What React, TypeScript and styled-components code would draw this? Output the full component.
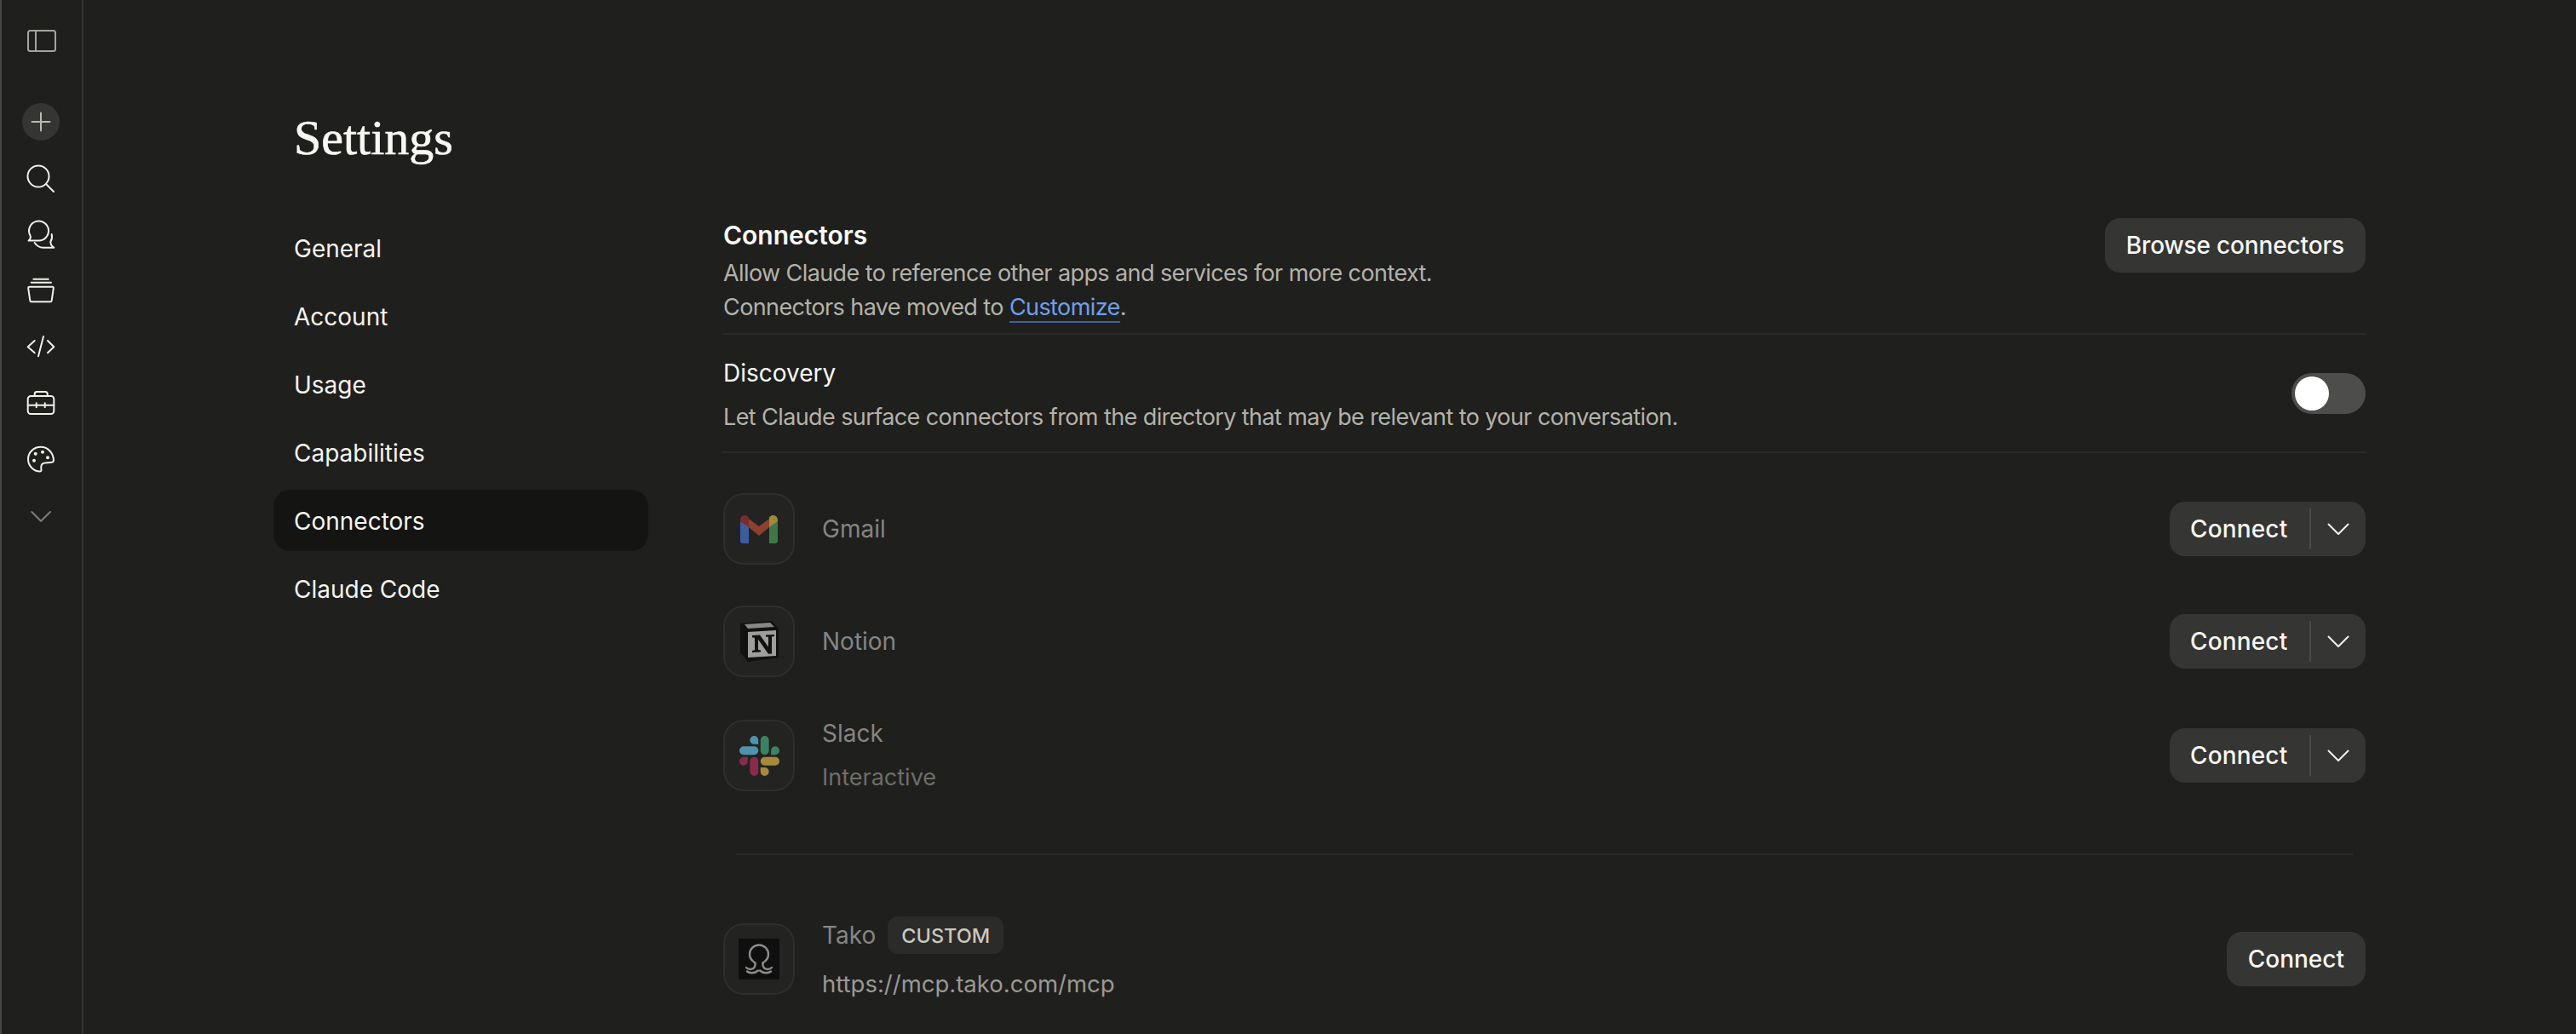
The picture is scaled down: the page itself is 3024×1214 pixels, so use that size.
import React from "react";
import styled, { createGlobalStyle } from "styled-components";

const GlobalStyle = createGlobalStyle`
  html, body {
    margin: 0;
    height: 100%;
    background: #1f1f1e;
    overflow: hidden;
  }
  #root {
    height: 100%;
  }
  * {
    box-sizing: border-box;
  }
`;

const Page = styled.div`
  display: flex;
  height: 1214px;
  overflow: hidden;
  background: #1f1f1e;
  color: #f5f4ef;
  font-family: Inter, "Liberation Sans", sans-serif;
`;

const Rail = styled.nav`
  flex: 0 0 98px;
  display: flex;
  flex-direction: column;
  align-items: center;
  padding: 15px 3px 0 0;
  border-left: 2px solid #474745;
  border-right: 2px solid #343432;
`;

const RailButton = styled.button<{ $gap?: number }>`
  flex: 0 0 66px;
  width: 48px;
  padding: 0;
  border: 0;
  background: transparent;
  display: flex;
  align-items: center;
  justify-content: center;
  margin-bottom: ${(props) => props.$gap ?? 0}px;
`;

const NewChat = styled.span`
  width: 44px;
  height: 44px;
  border-radius: 50%;
  background: #353533;
  display: flex;
  align-items: center;
  justify-content: center;
`;

const Main = styled.main`
  flex: 1;
  display: grid;
  grid-template-columns: 440px 1fr;
  grid-template-rows: 135px auto;
  column-gap: 88px;
  align-content: start;
  padding: 120px 247px 0 223px;
`;

const Title = styled.h1`
  grid-column: 1 / 3;
  margin: 0 0 0 24px;
  font-family: "Liberation Serif", serif;
  font-weight: 400;
  font-size: 58px;
  line-height: 83px;
  color: #f8f7f3;
  -webkit-text-stroke: 0.6px #f8f7f3;
`;

const SideNav = styled.div`
  display: flex;
  flex-direction: column;
  gap: 8px;
`;

const NavItem = styled.div<{ $active?: boolean }>`
  height: 72px;
  padding: 2px 0 0 24px;
  display: flex;
  align-items: center;
  border-radius: 20px;
  font-size: 28px;
  color: #f5f4ef;
  background: ${(props) => (props.$active ? "#141413" : "transparent")};
`;

const Content = styled.section`
  display: flex;
  flex-direction: column;
`;

const Header = styled.div`
  display: flex;
  justify-content: space-between;
  align-items: flex-start;
  height: 138px;
  border-bottom: 2px solid #2b2b29;
`;

const HeaderTitle = styled.h2`
  margin: -1px 0 3px;
  font-size: 30px;
  font-weight: 600;
  line-height: 44px;
  color: #fbfaf6;
`;

const Description = styled.p`
  margin: 0;
  font-size: 27px;
  line-height: 40px;
  color: #b3b2a9;
  letter-spacing: -0.59px;
`;

const Customize = styled.a`
  color: #6f9fe8;
  border-bottom: 2px solid #41609a;
`;

const Button = styled.button`
  height: 64px;
  padding: 0 25px;
  border: 0;
  border-radius: 18px;
  background: #353533;
  color: #f7f6f2;
  font-family: inherit;
  font-size: 28px;
  font-weight: 500;
`;

const BrowseButton = styled(Button)`
  margin-top: 1px;
  letter-spacing: -0.15px;
`;

const Discovery = styled.div`
  display: flex;
  justify-content: space-between;
  align-items: center;
  height: 139px;
  border-bottom: 2px solid #2b2b29;
`;

const DiscoveryText = styled.div`
  display: flex;
  flex-direction: column;
  gap: 10px;
  padding-top: 2px;
`;

const DiscoveryTitle = styled.div`
  font-size: 28px;
  line-height: 44px;
  color: #f8f7f3;
`;

const Toggle = styled.div`
  width: 87px;
  height: 48px;
  padding: 4px;
  border-radius: 24px;
  background: #4d4d4b;
`;

const Knob = styled.div`
  width: 40px;
  height: 40px;
  border-radius: 50%;
  background: #fff;
`;

const List = styled.div`
  display: flex;
  flex-direction: column;
  gap: 4px;
  padding-top: 25px;
`;

const Row = styled.div`
  display: flex;
  align-items: center;
  padding: 22px 0;
`;

const LogoBox = styled.div`
  flex: 0 0 84px;
  height: 84px;
  margin-right: 32px;
  display: flex;
  align-items: center;
  justify-content: center;
  border-radius: 24px;
  background: #232322;
  border: 2px solid #2e2e2c;
`;

const RowText = styled.div<{ $gap?: number; $twoLine?: boolean }>`
  flex: 1;
  display: flex;
  flex-direction: column;
  gap: ${(props) => props.$gap ?? 12}px;
  margin: ${(props) => (props.$twoLine ? "-2px 0" : "0")};
`;

const Name = styled.div`
  font-size: 28px;
  line-height: 40px;
  color: #858582;
`;

const SubText = styled.div`
  font-size: 27px;
  line-height: 40px;
  color: #6e6e6a;
`;

const SplitButton = styled.div`
  display: flex;
  align-items: center;
  height: 64px;
  width: 230px;
  border-radius: 18px;
  background: #353533;
`;

const SplitLabel = styled.span`
  flex: 0 0 166px;
  padding-left: 24px;
  font-size: 28px;
  font-weight: 500;
  letter-spacing: 0.15px;
  color: #f7f6f2;
  border-right: 2px solid #4a4a48;
  line-height: 48px;
`;

const SplitArrow = styled.span`
  flex: 1;
  display: flex;
  justify-content: center;
`;

const Separator = styled.div`
  height: 2px;
  margin: 49px 15px 72px;
  background: #2b2b29;
`;

const TakoRow = styled(Row)`
  padding: 0;
`;

const NameLine = styled.div`
  display: flex;
  align-items: center;
  gap: 14px;
  height: 44px;
`;

const Badge = styled.span`
  height: 44px;
  padding: 0 16px;
  display: flex;
  align-items: center;
  border-radius: 12px;
  background: #2b2b29;
  color: #c9c8c0;
  font-size: 23.5px;
  font-weight: 500;
`;

const Url = styled.div`
  font-size: 27.5px;
  line-height: 40px;
  color: #9a9992;
`;

const RailIcon = ({ children, color = "#f1f0eb" }: { children: React.ReactNode; color?: string }) => (
  <svg
    width="48"
    height="48"
    viewBox="0 0 48 48"
    fill="none"
    stroke={color}
    strokeWidth="2"
    strokeLinecap="round"
    strokeLinejoin="round"
  >
    {children}
  </svg>
);

const GmailLogo = () => (
  <svg width="44" height="33" viewBox="0 0 44 33">
    <path fill="#3d5c9e" d="M0 7v23a3 3 0 0 0 3 3h7V11z" />
    <path fill="#417647" d="M44 7v23a3 3 0 0 1-3 3h-7V11z" />
    <path fill="#8f3f30" d="M10 4l12 9 12-9v10L22 24 10 14z" />
    <path fill="#7a2d28" d="M0 5.500C0 1 5-1.500 8 .8L10 2.300V14L0 7z" />
    <path fill="#a08a35" d="M44 5.500C44 1 39-1.500 36 .8L34 2.300V14L44 7z" />
  </svg>
);

const NotionLogo = () => (
  <svg width="46" height="48" viewBox="0 0 46 48">
    <path fill="#111" d="M1 3l37-3 8 9v34l-36 5-9-11z" />
    <path fill="#b0b0ad" d="M6 4l30-2 5 5-31 2z" opacity=".75" />
    <path fill="#9e9e9c" d="M10 13l33-2v30l-33 2z" />
    <path fill="#111" d="M15 17l9-.5 10 14V19l-3-.4v-2l10-.6v2l-3 .5v20l-4 .3-12-17v12l3 .6v2l-10 .6v-2l3-.7V20l-3-.8z" />
  </svg>
);

const SlackLogo = () => (
  <svg width="47" height="47" viewBox="0 0 24 24">
    <path fill="#892a4d" d="M5.042 15.165a2.528 2.528 0 0 1-2.52 2.523A2.528 2.528 0 0 1 0 15.165a2.527 2.527 0 0 1 2.522-2.52h2.52v2.52zM6.313 15.165a2.527 2.527 0 0 1 2.521-2.52 2.527 2.527 0 0 1 2.521 2.52v6.313A2.528 2.528 0 0 1 8.834 24a2.528 2.528 0 0 1-2.521-2.522v-6.313z" />
    <path fill="#4f93ad" d="M8.834 5.042a2.528 2.528 0 0 1-2.521-2.52A2.528 2.528 0 0 1 8.834 0a2.528 2.528 0 0 1 2.521 2.522v2.52H8.834zM8.834 6.313a2.528 2.528 0 0 1 2.521 2.521 2.528 2.528 0 0 1-2.521 2.521H2.522A2.528 2.528 0 0 1 0 8.834a2.528 2.528 0 0 1 2.522-2.521h6.312z" />
    <path fill="#3c8262" d="M18.956 8.834a2.528 2.528 0 0 1 2.522-2.521A2.528 2.528 0 0 1 24 8.834a2.528 2.528 0 0 1-2.522 2.521h-2.522V8.834zM17.688 8.834a2.528 2.528 0 0 1-2.523 2.521 2.527 2.527 0 0 1-2.52-2.521V2.522A2.527 2.527 0 0 1 15.165 0a2.528 2.528 0 0 1 2.523 2.522v6.312z" />
    <path fill="#a68a38" d="M15.165 18.956a2.528 2.528 0 0 1 2.523 2.522A2.528 2.528 0 0 1 15.165 24a2.527 2.527 0 0 1-2.52-2.522v-2.522h2.52zM15.165 17.688a2.527 2.527 0 0 1-2.52-2.523 2.526 2.526 0 0 1 2.52-2.52h6.313A2.527 2.527 0 0 1 24 15.165a2.528 2.528 0 0 1-2.522 2.523h-6.313z" />
  </svg>
);

const TakoLogo = () => (
  <svg width="48" height="48" viewBox="0 0 48 48" fill="none" stroke="#8c8c89" strokeWidth="2.4" strokeLinecap="round">
    <rect width="48" height="48" fill="#0f0f0f" stroke="none" />
    <path d="M19.500 28.500C15.500 26 13 22 13 18.500a11 11 0 0 1 22 0C35 22 32.500 26 28.500 28.500" />
    <path d="M19.500 28.500v3M28.500 28.500v3M9 34c3 3 9 3 10.500-2.500M39 34c-3 3-9 3-10.500-2.500" />
    <path d="M10 38.500c3 2.500 9 2.500 13-1M38 38.500c-3 2.500-9 2.500-13-1" />
  </svg>
);

const Chevron = () => (
  <svg width="26" height="15" viewBox="0 0 26 15" fill="none" stroke="#f1f0eb" strokeWidth="2" strokeLinecap="round" strokeLinejoin="round">
    <path d="M1.500 1.500L13 13 24.500 1.500" />
  </svg>
);

const navItems = ["General", "Account", "Usage", "Capabilities", "Connectors", "Claude Code"];

const connectors = [
  { name: "Gmail", logo: <GmailLogo /> },
  { name: "Notion", logo: <NotionLogo /> },
  { name: "Slack", sub: "Interactive", logo: <SlackLogo /> },
];

export default function App() {
  return (
    <Page>
      <GlobalStyle />
      <Rail>
        <RailButton $gap={29}>
          <RailIcon color="#a5a49d">
            <rect x="9" y="12" width="32" height="24" rx="2.500" />
            <path d="M18 12v24" />
          </RailIcon>
        </RailButton>
        <RailButton>
          <NewChat>
            <svg width="24" height="24" viewBox="0 0 24 24" fill="none" stroke="#b9b8b1" strokeWidth="2" strokeLinecap="round">
              <path d="M12 1.500v21M1.500 12h21" />
            </svg>
          </NewChat>
        </RailButton>
        <RailButton>
          <RailIcon>
            <circle cx="21" cy="22" r="12.500" />
            <path d="M30 31l9 9" />
          </RailIcon>
        </RailButton>
        <RailButton>
          <RailIcon>
            <path d="M9.500 31.500c2-1.500 2.700-3.500 2.200-5.500A11.500 11.500 0 1 1 20.500 31.500z" />
            <path d="M16.700 34c2.500 3.800 6 5.700 10 5.700h12.600c-2.600-1.600-4-3.800-4-6.700 1.800-3 2.200-6 1.400-9" />
          </RailIcon>
        </RailButton>
        <RailButton>
          <RailIcon>
            <path d="M15.300 10.700h17.400M12.700 14.700H36" />
            <path d="M10.500 19.700h27a1.400 1.400 0 0 1 1.300 1.600l-2.100 14.500a1.700 1.700 0 0 1-1.700 1.500H13a1.700 1.700 0 0 1-1.700-1.500L9.200 21.300a1.400 1.400 0 0 1 1.300-1.600z" />
          </RailIcon>
        </RailButton>
        <RailButton>
          <RailIcon>
            <path d="M16.700 17l-8 7.300 8 7M27 12l-6 23.300M32 17l7.300 7.300-7.300 7" />
          </RailIcon>
        </RailButton>
        <RailButton>
          <RailIcon>
            <rect x="8.700" y="16" width="30.600" height="21" rx="3.500" />
            <path d="M16.700 16v-2.500a2.500 2.500 0 0 1 2.500-2.500h10a2.500 2.500 0 0 1 2.500 2.500V16" />
            <path d="M8.700 26.700h30.600M18.700 24.300v5M28.700 24.300v5" />
          </RailIcon>
        </RailButton>
        <RailButton>
          <RailIcon>
            <path d="M38.900 26C39.200 17 32 9.800 24 9.800 15.500 9.800 9 16 9 24c0 8 6.500 14.500 14 14.500 2.500 0 1-3 1.300-5.500.2-3 1.700-4.200 4.700-4.400l6-.6c2.500 0 3.800-.5 3.900-2z" />
            <circle cx="17.700" cy="17.700" r="1" />
            <circle cx="26" cy="15.700" r="1" />
            <circle cx="32" cy="22.300" r="1" />
            <circle cx="16" cy="25.700" r="1" />
          </RailIcon>
        </RailButton>
        <RailButton>
          <RailIcon color="#7e7d79">
            <path d="M13.300 20L24 30.700 35 20" />
          </RailIcon>
        </RailButton>
      </Rail>
      <Main>
        <Title>Settings</Title>
        <SideNav>
          {navItems.map((item) => (
            <NavItem key={item} $active={item === "Connectors"}>
              {item}
            </NavItem>
          ))}
        </SideNav>
        <Content>
          <Header>
            <div>
              <HeaderTitle>Connectors</HeaderTitle>
              <Description>Allow Claude to reference other apps and services for more context.</Description>
              <Description>
                Connectors have moved to <Customize>Customize</Customize>.
              </Description>
            </div>
            <BrowseButton>Browse connectors</BrowseButton>
          </Header>
          <Discovery>
            <DiscoveryText>
              <DiscoveryTitle>Discovery</DiscoveryTitle>
              <Description>Let Claude surface connectors from the directory that may be relevant to your conversation.</Description>
            </DiscoveryText>
            <Toggle>
              <Knob />
            </Toggle>
          </Discovery>
          <List>
            {connectors.map((connector) => (
              <Row key={connector.name}>
                <LogoBox>{connector.logo}</LogoBox>
                <RowText $twoLine={!!connector.sub}>
                  <Name>{connector.name}</Name>
                  {connector.sub && <SubText>{connector.sub}</SubText>}
                </RowText>
                <SplitButton>
                  <SplitLabel>Connect</SplitLabel>
                  <SplitArrow>
                    <Chevron />
                  </SplitArrow>
                </SplitButton>
              </Row>
            ))}
          </List>
          <Separator />
          <TakoRow>
            <LogoBox>
              <TakoLogo />
            </LogoBox>
            <RowText $gap={15}>
              <NameLine>
                <Name>Tako</Name>
                <Badge>CUSTOM</Badge>
              </NameLine>
              <Url>https://mcp.tako.com/mcp</Url>
            </RowText>
            <Button>Connect</Button>
          </TakoRow>
        </Content>
      </Main>
    </Page>
  );
}
